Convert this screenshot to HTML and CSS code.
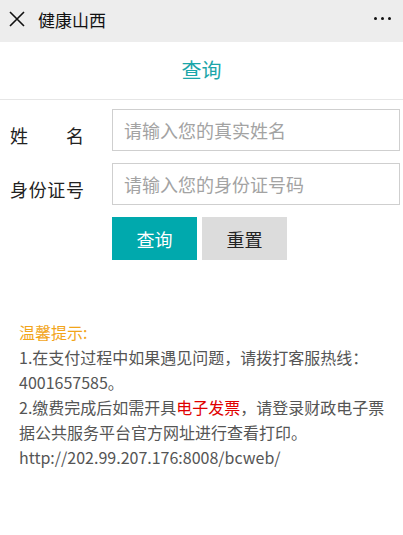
FILE: index.html
```html
<!DOCTYPE html>
<html lang="zh-CN">
<head>
<meta charset="utf-8">
<title>健康山西</title>
<link rel="stylesheet" href="styles.css">
</head>
<body>
<div class="topbar">
  <svg class="close" width="16" height="16" viewBox="0 0 16 16"><path d="M1 1L15 15M15 1L1 15" stroke="#111" stroke-width="1.6" fill="none"/></svg>
  <span class="app-title">健康山西</span>
  <span class="more"><i></i><i></i><i></i></span>
</div>
<div class="header">查询</div>
<form class="form">
  <div class="row">
    <label class="label">姓名</label>
    <input class="field" type="text" placeholder="请输入您的真实姓名">
  </div>
  <div class="row">
    <label class="label">身份证号</label>
    <input class="field" type="text" placeholder="请输入您的身份证号码">
  </div>
  <div class="actions">
    <button type="button" class="btn btn-primary">查询</button>
    <button type="button" class="btn btn-reset">重置</button>
  </div>
</form>
<div class="tips">
  <div class="tips-title">温馨提示:</div>
  <p>1.在支付过程中如果遇见问题，请拨打客服热线：4001657585。</p>
  <p>2.缴费完成后如需开具<span class="red">电子发票</span>，请登录财政电子票据公共服务平台官方网址进行查看打印。http://202.99.207.176:8008/bcweb/</p>
</div>
</body>
</html>
```
FILE: styles.css
```css
* { box-sizing: border-box; }
body {
  margin: 0;
  font-family: "Noto Sans CJK SC", sans-serif;
  background: #fff;
  color: #333;
}
.topbar {
  height: 42px;
  background: #ededed;
  display: flex;
  align-items: center;
  padding: 0 12px 0 9px;
}
.close { flex: none; margin-top: -4px; }
.app-title {
  font-size: 17px;
  color: #111;
  margin-left: 13px;
  margin-top: -4px;
  flex: 1;
}
.more { display: flex; gap: 4px; margin-top: -6px; }
.more i {
  width: 3px; height: 3px; border-radius: 50%;
  background: #111; display: block;
}
.header {
  height: 58px;
  border-bottom: 1px solid #e6e6e6;
  display: flex;
  align-items: center;
  justify-content: center;
  font-size: 20px;
  color: #1ba6a9;
  padding-bottom: 2px;
}
.form {
  padding: 9px 3px 0 10px;
  display: flex;
  flex-direction: column;
  gap: 12px;
}
.row {
  display: flex;
  align-items: center;
  gap: 28px;
}
.label {
  width: 74px;
  font-size: 18px;
  color: #222;
  text-align: justify;
  text-align-last: justify;
  padding-top: 10px;
  line-height: 1;
}
.field {
  flex: 1;
  height: 42px;
  border: 1px solid #cfcfcf;
  padding: 0 11px;
  font-size: 18px;
  font-family: inherit;
  color: #333;
  outline: none;
}
.field::placeholder { color: #a3a3a3; }
.actions {
  display: flex;
  gap: 5px;
  padding-left: 102px;
}
.btn {
  width: 85px;
  height: 43px;
  border: none;
  font-size: 18px;
  font-family: inherit;
  padding: 0;
}
.btn-primary { background: #00a9ad; color: #fff; }
.btn-reset { background: #dcdcdc; color: #222; }
.tips {
  padding: 0 14px 0 19px;
  margin-top: 60px;
  font-size: 16px;
  line-height: 25px;
  color: #555;
}
.tips-title { color: #f2a51a; }
.tips p { margin: 0; }
.red { color: #e00000; }
```
